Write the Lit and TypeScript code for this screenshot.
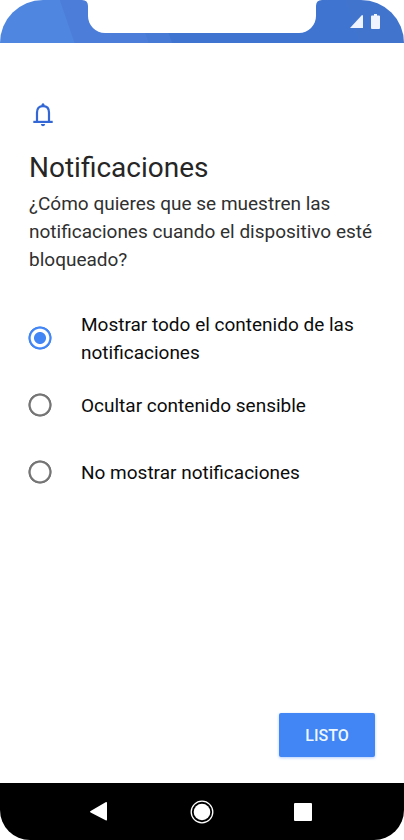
import { LitElement, html, css, svg } from "lit";
import { customElement, state } from "lit/decorators.js";

const OPTIONS = [
  { id: "all", label: "Mostrar todo el contenido de las notificaciones" },
  { id: "sensitive", label: "Ocultar contenido sensible" },
  { id: "none", label: "No mostrar notificaciones" },
];

const NAV = [
  { label: "Atrás", shape: svg`<path d="M2.6 11 17.6 2.2Q19 1.6 19 3V19.500Q19 20.900 17.600 20.200L2.600 12.600Q1.200 11.800 2.600 11Z"/>` },
  { label: "Inicio", shape: svg`<circle cx="12" cy="12" r="8.300"/><circle cx="12" cy="12" r="10.800" fill="none" stroke="#fff" stroke-width="1.300"/>` },
  { label: "Recientes", shape: svg`<rect x="2" y="3" width="18" height="18" rx="1"/>` },
];

@customElement("app-root")
export class AppRoot extends LitElement {
  static styles = css`
    :host {
      display: flex;
      flex-direction: column;
      min-height: 100vh;
      background: #fff;
      font-family: Roboto, "Liberation Sans", sans-serif;
      color: #262626;
    }
    .status {
      display: flex;
      align-items: flex-start;
      height: 43px;
      border-radius: 43px 43px 0 0;
      background: linear-gradient(71deg, #4f86df 70px, #4b7dd9 71px 140px, #477ad5 141px 162px, #3f75d1 163px 340px, #4174cc 341px);
    }
    .side { flex: 0 0 82px; }
    .notch { flex: 1; height: 33px; background: #fff; }
    .edge { flex: none; display: block; fill: #fff; }
    .flip { transform: scaleX(-1); }
    .indicators {
      display: flex;
      gap: 8px;
      padding: 14px 0 0 28px;
      box-sizing: border-box;
    }
    .indicators svg { display: block; fill: #eef3ff; }
    main {
      flex: 1;
      display: flex;
      flex-direction: column;
      padding: 60px 29px 26px 28px;
    }
    .bell { display: block; margin-left: 3px; }
    h1 {
      margin: 21px 0 0 1px;
      font-size: 28px;
      line-height: 40px;
      font-weight: 400;
    }
    p {
      margin: 2px 0 0 1px;
      font-size: 19px;
      line-height: 28px;
      color: #303030;
    }
    fieldset {
      border: 0;
      margin: 36px 0 0;
      padding: 0;
      display: flex;
      flex-direction: column;
      gap: 10px;
    }
    label {
      display: flex;
      align-items: center;
      gap: 29px;
      min-height: 57px;
      font-size: 19px;
      line-height: 28px;
      color: #0c0c0c;
    }
    input {
      appearance: none;
      flex: none;
      width: 24px;
      height: 24px;
      margin: 0 0 2px;
      border-radius: 50%;
      background: radial-gradient(circle closest-side, #fff 73%, #757575 82% 94%, #fff);
    }
    input:checked {
      background: radial-gradient(circle closest-side, #4285f4 46%, #fff 54% 73%, #4285f4 82% 94%, #fff);
    }
    .done {
      align-self: flex-end;
      margin-top: auto;
      width: 96px;
      height: 44px;
      padding: 0;
      border: 0;
      border-radius: 2px;
      background: #4285f4;
      color: #eff7ff;
      font-family: inherit;
      font-size: 16px;
      font-weight: 500;
      box-shadow: 0 1px 3px #4285f466;
    }
    nav {
      display: grid;
      grid-template-columns: repeat(3, 1fr);
      height: 57px;
      padding: 0 49px;
      background: #000;
      border-radius: 0 0 30px 30px;
    }
    nav button {
      display: grid;
      place-items: center;
      padding: 0;
      border: 0;
      background: none;
    }
    nav svg { fill: #fff; }
  `;

  @state() private selected = "all";

  render() {
    const edge = svg`<path d="M0 0Q6 0 6 6V16A17 17 0 0 0 23 33V0Z"/>`;
    return html`
      <header class="status">
        <div class="side"></div>
        <svg class="edge" width="23" height="33">${edge}</svg>
        <div class="notch"></div>
        <svg class="edge flip" width="23" height="33">${edge}</svg>
        <div class="side indicators">
          <svg width="13" height="14"><path d="M0 14 12 1Q13 1 13 2V14Z"/></svg>
          <svg width="9" height="15"><path d="M3 0H6V1.500H8Q9 1.500 9 2.500V14Q9 15 8 15H1Q0 15 0 14V2.500Q0 1.500 1 1.500H3Z"/></svg>
        </div>
      </header>
      <main>
        <svg class="bell" width="24" height="24" viewBox="0 0 24 24" fill="none" stroke="#3367d6" stroke-width="2.200">
          <path d="M6 19V9.500Q6 3.200 12 3.200T18 9.500V19"/>
          <path d="M2.300 18.900H21.700"/>
          <path d="M10.500 3V1.500Q12 -1 13.500 1.500V3ZM9.800 21H14.200Q13.800 23.200 12 23.200T9.800 21Z" fill="#3367d6" stroke="none"/>
        </svg>
        <h1>Notificaciones</h1>
        <p>¿Cómo quieres que se muestren las notificaciones cuando el dispositivo esté bloqueado?</p>
        <fieldset aria-label="Notificaciones">
          ${OPTIONS.map(
            (o) => html`<label for=${o.id}>
              <input type="radio" name="mode" id=${o.id} .checked=${this.selected === o.id}
                @change=${() => (this.selected = o.id)} />
              <span>${o.label}</span>
            </label>`
          )}
        </fieldset>
        <button class="done" type="button">LISTO</button>
      </main>
      <nav>
        ${NAV.map(
          (n) => html`<button type="button" aria-label=${n.label}>
            <svg width="24" height="24" viewBox="0 0 24 24">${n.shape}</svg>
          </button>`
        )}
      </nav>
    `;
  }
}
